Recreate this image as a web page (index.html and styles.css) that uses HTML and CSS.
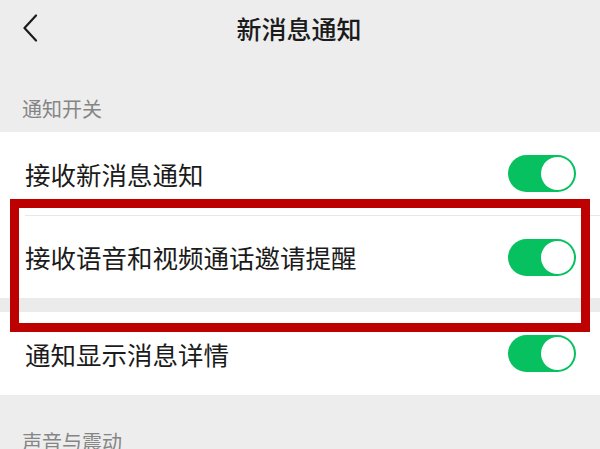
FILE: index.html
```html
<!DOCTYPE html>
<html lang="zh-CN">
<head>
<meta charset="utf-8">
<title>新消息通知</title>
<link rel="stylesheet" href="styles.css">
</head>
<body>
<div class="page">
  <header class="nav">
    <svg class="back" width="16" height="28" viewBox="0 0 16 28" aria-hidden="true">
      <polyline points="14,1.5 2.5,14 14,26.5" fill="none" stroke="#1c1c1c" stroke-width="2.2" stroke-linecap="round" stroke-linejoin="round"/>
    </svg>
    <h1 class="title">新消息通知</h1>
  </header>

  <div class="section-label">通知开关</div>

  <div class="group">
    <div class="row">
      <span class="row-text">接收新消息通知</span>
      <span class="switch"></span>
    </div>
    <div class="row row-sep">
      <span class="row-text">接收语音和视频通话邀请提醒</span>
      <span class="switch"></span>
    </div>
  </div>

  <div class="gap"></div>

  <div class="group">
    <div class="row">
      <span class="row-text">通知显示消息详情</span>
      <span class="switch"></span>
    </div>
  </div>

  <div class="section-label">声音与震动</div>

  <div class="highlight"></div>
</div>
</body>
</html>
```
FILE: styles.css
```css
html, body {
  margin: 0;
  padding: 0;
}
body {
  background: #ededed;
  font-family: "Noto Sans CJK SC", "Noto Sans", sans-serif;
  color: #1b1b1b;
  overflow: hidden;
}
.page {
  position: relative;
  width: 600px;
  height: 449px;
  overflow: hidden;
  background: #ededed;
}
.nav {
  position: relative;
  height: 62px;
  display: flex;
  align-items: center;
  justify-content: center;
}
.back {
  position: absolute;
  left: 22px;
  top: 14px;
}
.title {
  margin: 0;
  font-size: 25px;
  font-weight: 500;
  line-height: 34px;
  color: #1b1b1b;
  margin-left: -2px;
  margin-top: -6px;
}
.section-label {
  height: 70px;
  box-sizing: border-box;
  padding: 33px 0 0 22px;
  font-size: 20px;
  line-height: 28px;
  color: #858585;
}
.group {
  background: #fff;
}
.row {
  height: 83px;
  box-sizing: border-box;
  display: flex;
  align-items: center;
  justify-content: space-between;
  padding: 0 24px 0 25px;
  position: relative;
}
.row-sep {
  border-top: 1px solid transparent;
}
.row-sep::before {
  content: "";
  position: absolute;
  left: 25px;
  right: 0;
  top: -1px;
  height: 1px;
  background: #e8e8e8;
}
.row-text {
  font-size: 25.5px;
  line-height: 34px;
  color: #1b1b1b;
}
.switch {
  position: relative;
  width: 68px;
  height: 37px;
  border-radius: 19px;
  background: #07c160;
  flex: none;
}
.switch::after {
  content: "";
  position: absolute;
  right: 2px;
  top: 2px;
  width: 33px;
  height: 33px;
  border-radius: 50%;
  background: #fff;
}
.gap {
  height: 14px;
  background: #ebebeb;
}
.highlight {
  position: absolute;
  left: 10px;
  top: 199px;
  width: 580px;
  height: 133px;
  box-sizing: border-box;
  border: 9px solid #bd0000;
}
```
